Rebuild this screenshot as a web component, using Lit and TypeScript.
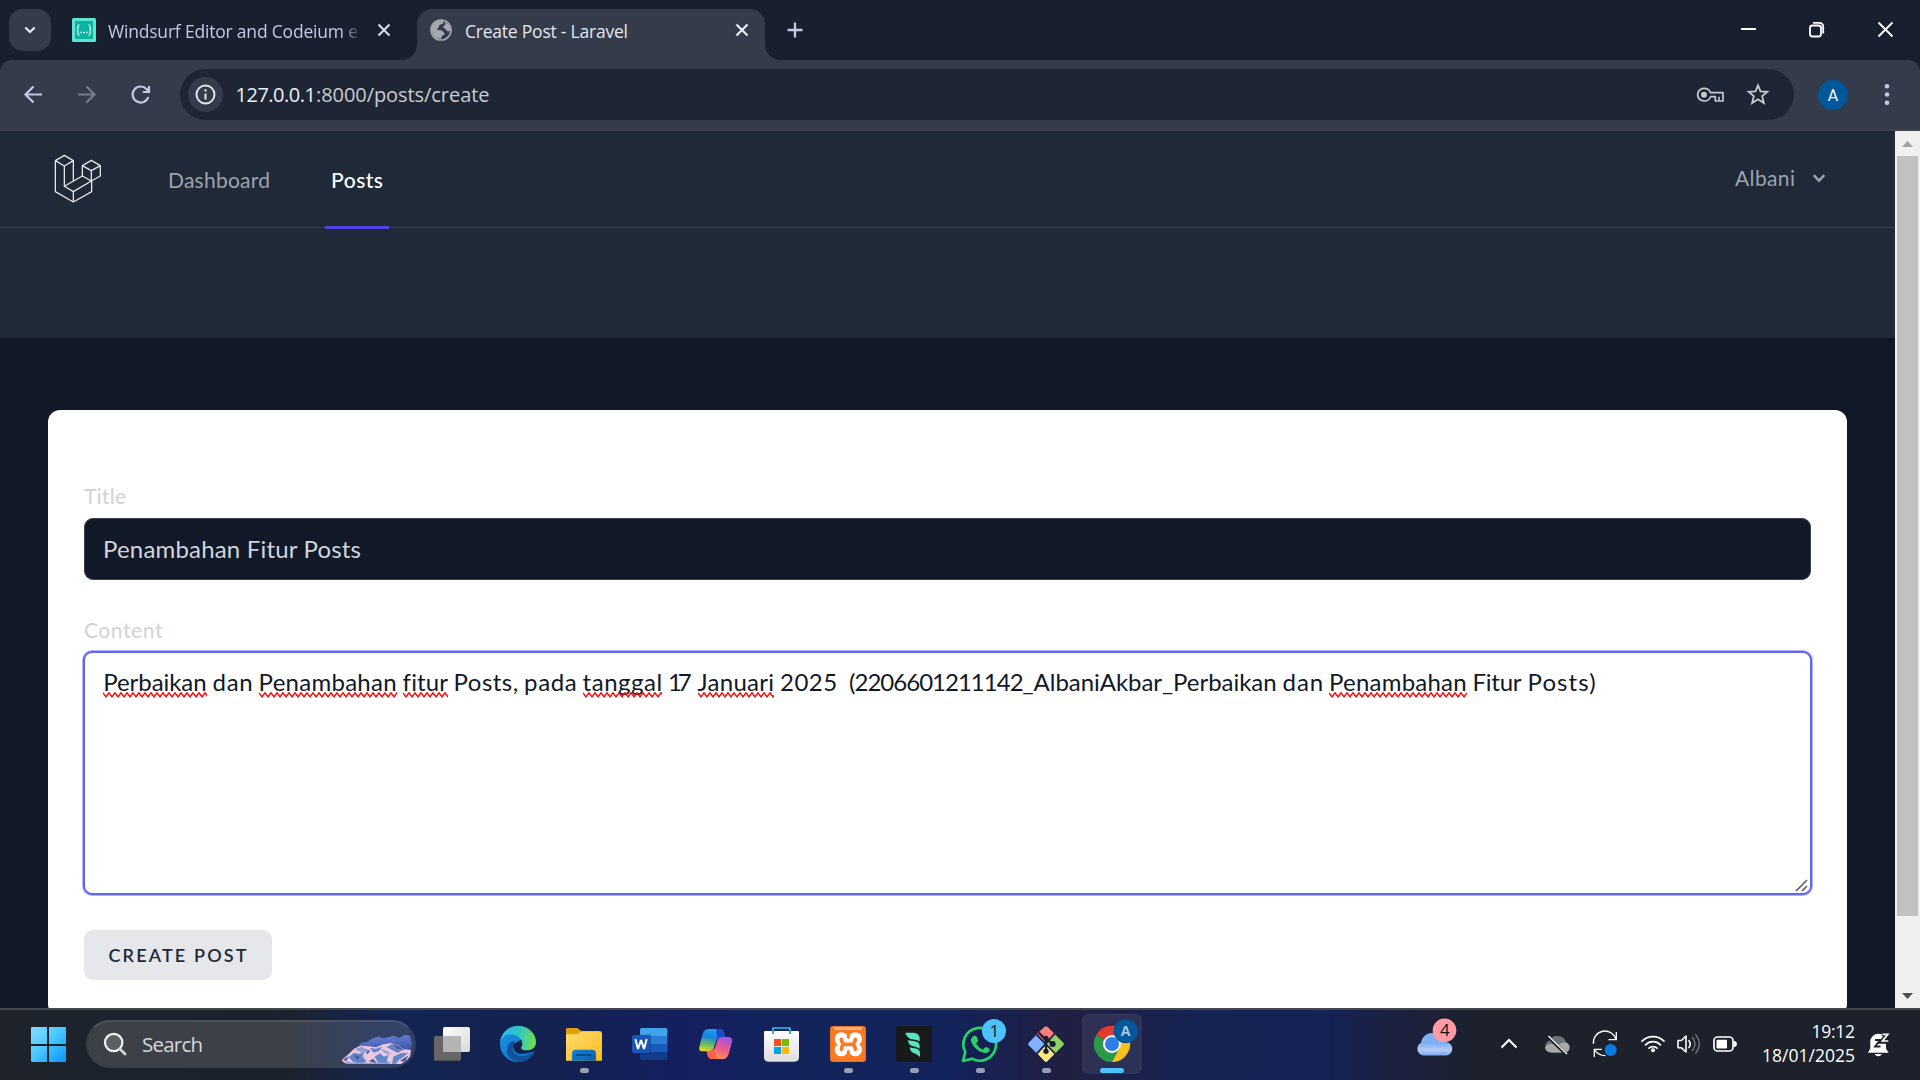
import { LitElement, html, css, svg, nothing } from "lit";
import { customElement, property } from "lit/decorators.js";

/** A run of text spread by letter-spacing so that it fills a given width. */
@customElement("fit-text")
class FitText extends LitElement {
  @property({ type: Number }) width = 0;
  @property({ type: Boolean }) misspelled = false;
  @property() text = "";

  static styles = css`
    :host { display: inline-block; position: relative; white-space: pre; flex: none; }
    .squiggle { position: absolute; left: 0; top: 28px; overflow: hidden; }
  `;

  firstUpdated() {
    const run = this.renderRoot.querySelector(".run") as HTMLElement;
    const natural = run.getBoundingClientRect().width;
    const gap = (this.width - natural) / Math.max(1, this.text.length - 1);
    run.style.letterSpacing = gap.toFixed(3) + "px";
    this.style.width = this.width + "px";
  }

  private squiggle() {
    const points: string[] = [];
    for (let i = 0; i * 3 <= this.width + 3; i++) points.push(`${i * 3},${i % 2 ? 4.8 : 0.8}`);
    return html`<svg class="squiggle" width=${this.width} height="6">
      <polyline points=${points.join(" ")} fill="none" stroke="#ff0000" stroke-width="1.4" />
    </svg>`;
  }

  render() {
    return html`<span class="run">${this.text}</span>${this.misspelled ? this.squiggle() : nothing}`;
  }
}

const pic = (x: number, y: number, w: number, h: number, body: unknown) =>
  html`<svg class="pic" width=${w} height=${h} viewBox="${x} ${y} ${w} ${h}">${body}</svg>`;

const third = (ox: number, oy: number, body: unknown) =>
  svg`<g transform="translate(${ox} ${oy}) scale(0.33333)">${body}</g>`;

/* ---------- taskbar artwork ---------- */
const taskView = third(400, 1000, svg`
  <defs><linearGradient id="tv" x1="0" y1="0" x2="1" y2="1"><stop offset="0" stop-color="#fff"/><stop offset="1" stop-color="#d8d8d8"/></linearGradient></defs>
  <rect x="102" y="108" width="81" height="74" rx="5" fill="#666"/>
  <rect x="129" y="81" width="81" height="75" rx="5" fill="url(#tv)"/>
  <path d="M129 108H183V156H134Q129 156 129 151Z" fill="#b4b4b6"/>
  <path d="M104 181H181" stroke="#505052" stroke-width="3"/>`);

const edge = third(400, 1000, svg`
  <defs>
    <linearGradient id="eg1" x1="0" y1="0.3" x2="1" y2="0.4"><stop offset="0" stop-color="#2fb2ee"/><stop offset="0.5" stop-color="#30c5c8"/><stop offset="1" stop-color="#6be04c"/></linearGradient>
    <linearGradient id="eg2" x1="0" y1="0" x2="0.8" y2="1"><stop offset="0" stop-color="#1b94e0"/><stop offset="1" stop-color="#0a74cf"/></linearGradient>
  </defs>
  <circle cx="354" cy="132" r="54" fill="url(#eg2)"/>
  <path d="M341 131C333 150 342 166 364 168C380 168 392 160 400 158C392 176 376 186 356 186C330 182 318 164 321 145C323 130 336 122 344 122Q341 126 341 131Z" fill="#10539c"/>
  <path d="M341 131C335 150 350 163 366 161C384 161 394 154 401 156L412 140L408 130L366 118Z" fill="#142150"/>
  <path d="M300 128C303 99 326 78 354 78C386 78 408 101 408 126C408 142 396 151 381 151C369 151 361 147 364 142C368 136 367 130 366 124C359 106 338 102 324 104C311 107 303 116 300 128Z" fill="url(#eg1)"/>`);

const explorer = third(400, 1000, svg`
  <defs><linearGradient id="fx" x1="0" y1="0" x2="1" y2="1"><stop offset="0" stop-color="#ffdc70"/><stop offset="1" stop-color="#fcbd1c"/></linearGradient>
  <linearGradient id="fb" x1="0" y1="0" x2="1" y2="1"><stop offset="0" stop-color="#0f83d8"/><stop offset="1" stop-color="#0f5fac"/></linearGradient></defs>
  <path d="M498 88Q498 84 503 84H529Q533 84 536 87L545 94H598V120H498Z" fill="#e0a106"/>
  <path d="M498 103H528Q534 103 538 99L542 96Q545 94 548 94H601Q606 94 606 99V182H498Z" fill="url(#fx)"/>
  <path d="M516 182V161Q516 149 528 149H576Q588 149 588 161V182Z" fill="url(#fb)"/>
  <path d="M530 165H572" stroke="#0b4c8b" stroke-width="6" stroke-linecap="round"/>`);

const word = third(400, 1000, svg`
  <rect x="720" y="84" width="82" height="96" rx="5" fill="#123d8a"/>
  <path d="M720 108V89Q720 84 725 84H797Q802 84 802 89V108Z" fill="#41a5ee"/>
  <rect x="720" y="108" width="82" height="24" fill="#2b7cd3"/>
  <rect x="720" y="132" width="82" height="24" fill="#185abd"/>
  <rect x="720" y="104" width="33" height="60" fill="#0c3578" opacity=".45"/>
  <rect x="696" y="105" width="54" height="54" rx="5" fill="#1857b8"/>
  <path d="M706 117L714 147L723 120L732 147L740 117" fill="none" stroke="#fff" stroke-width="6" stroke-linejoin="bevel"/>`);

const copilot = third(400, 1000, svg`
  <defs>
    <linearGradient id="cp1" x1="0.4" y1="0" x2="0.2" y2="1"><stop offset="0" stop-color="#1aa0f0"/><stop offset="0.35" stop-color="#1684dc"/><stop offset="0.7" stop-color="#6cc05c"/><stop offset="1" stop-color="#f4d21f"/></linearGradient>
    <linearGradient id="cp2" x1="0.7" y1="0" x2="0.3" y2="1"><stop offset="0" stop-color="#a053e8"/><stop offset="0.5" stop-color="#ee5a8c"/><stop offset="1" stop-color="#ff9a4a"/></linearGradient>
  </defs>
  <path d="M924 87H958Q968 87 971 97L976 112H962Q952 112 948 124L940 148Q935 154 925 154H906Q895 153 898 140L908 102Q912 88 924 87Z" fill="url(#cp1)"/>
  <path d="M948 87H958Q968 87 971 97L976 112H962Q956 112 952 117Z" fill="#1b49cc"/>
  <path d="M970 177H936Q926 177 923 166L920 153H932Q942 151 946 140L954 116Q958 111 968 111H986Q999 112 996 126L986 162Q981 177 970 177Z" fill="url(#cp2)"/>
  <path d="M936 177Q926 177 923 166L920 153H932Q939 152 943 147L950 177Z" fill="#fb6248"/>`);

const store = third(400, 1000, svg`
  <defs><linearGradient id="st" x1="0" y1="0" x2="0" y2="1"><stop offset="0" stop-color="#fff"/><stop offset="1" stop-color="#dcdcde"/></linearGradient></defs>
  <path d="M1119 101V84H1170V101" fill="none" stroke="#35bdf2" stroke-width="5"/>
  <path d="M1092 96Q1092 93 1095 93H1194Q1197 93 1197 96V172Q1197 185 1184 185H1105Q1092 185 1092 172Z" fill="url(#st)"/>
  <path d="M1119 93V102M1170 93V102" stroke="#1490df" stroke-width="5"/>
  <rect x="1122" y="117" width="21" height="21" fill="#f25022"/><rect x="1146" y="117" width="21" height="21" fill="#7fba00"/>
  <rect x="1122" y="141" width="21" height="21" fill="#00a4ef"/><rect x="1146" y="141" width="21" height="21" fill="#ffb900"/>`);

const dot = (cx: number) => svg`<rect x=${cx - 13} y="204" width="27" height="15" rx="7.5" fill="#9a9fb8"/>`;

const xampp = third(780, 1000, svg`
  <rect x="150" y="78" width="108" height="108" rx="9" fill="#ee7423"/>
  <rect x="154" y="92" width="100" height="90" rx="5" fill="#fb7a24"/>
  <path d="M158 81H250L243 90H165Z" fill="#f9b184"/>
  <g fill="#fff"><circle cx="184" cy="117" r="20"/><circle cx="226" cy="117" r="20"/><circle cx="184" cy="149" r="20"/><circle cx="226" cy="149" r="20"/><rect x="176" y="117" width="58" height="32"/></g>
  <path d="M184 118Q184 125 190 133Q184 141 184 148M226 118Q226 125 220 133Q226 141 226 148M190 133H220" fill="none" stroke="#fb7a24" stroke-width="11" stroke-linecap="round"/>
  <circle cx="205" cy="110" r="5" fill="#fb7a24"/><circle cx="205" cy="156" r="5" fill="#fb7a24"/>`);

const windsurfApp = third(780, 1000, svg`
  <rect x="348" y="78" width="108" height="108" rx="9" fill="#17191b"/>
  <g fill="#58e5bb"><path d="M376 98H400Q419 98 419 118V124Q412 119 396 118Q382 116 376 98Z"/>
  <path d="M383 121Q387 122 400 123Q419 124 419 138V146Q412 141 399 139Q387 137 383 121Z"/>
  <path d="M389 142Q393 143 404 145Q420 147 420 160V171Q413 163 403 160Q391 157 389 142Z"/></g>`);

const whatsapp = third(780, 1000, svg`
  <path d="M549 183L556 156A49 49 0 1 1 576 176Z" fill="#142150" stroke="#25d366" stroke-width="8" stroke-linejoin="round"/>
  <path d="M581 108Q585 105 589 109L594 119Q595 123 592 126L588 130Q595 144 609 149L614 143Q617 140 621 142L628 146Q631 150 626 155Q614 165 594 151Q577 138 573 123Q572 114 581 108Z" fill="#25d366"/>
  <circle cx="642" cy="93" r="36" fill="#4cc2ff"/>`);

const gitBash = third(780, 1000, svg`
  <path d="M770 103L794 80Q798 77 802 80L828 106L799 134Z" fill="#ff7f7f"/>
  <path d="M768 106L746 128Q743 132 746 136L769 159L796 132Z" fill="#80b3ff"/>
  <path d="M827 105L850 128Q854 132 850 136L827 159L799 132Z" fill="#8dd35f"/>
  <path d="M771 160L798 134L826 160L802 184Q798 188 794 184Z" fill="#ffe680"/>
  <path d="M824 101L769 163M770 104L826 162" stroke="#1a2048" stroke-width="5"/>
  <path d="M776 98L798 120V152M799 116L816 131" stroke="#1a1d38" stroke-width="7" fill="none"/>
  <circle cx="798" cy="115" r="8" fill="#1a1d38"/><circle cx="798" cy="154" r="8" fill="#1a1d38"/><circle cx="818" cy="132" r="9" fill="#1a1d38"/>`);

const chrome = third(780, 1000, svg`
  <rect x="908" y="43" width="176" height="177" rx="16" fill="#fff" fill-opacity=".08" stroke="#fff" stroke-opacity=".09" stroke-width="3"/>
  <path d="M996 132L949 105A54 54 0 0 1 1043 105Z" fill="#e33b2e"/>
  <path d="M996 132L949 105A54 54 0 0 0 996 186L1019 146Z" fill="#2b9a48"/>
  <path d="M996 132L1043 105A54 54 0 0 1 996 186L1019 145Z" fill="#fcc31e"/>
  <path d="M996 105H1043A54 54 0 0 1 1050 132L1022 140Z" fill="#fcc31e"/>
  <circle cx="996" cy="132" r="27" fill="#fff"/><circle cx="996" cy="132" r="21" fill="#2f7de9"/>
  <circle cx="1037" cy="94" r="36" fill="#03579b"/>
  <rect x="960" y="204" width="72" height="15" rx="7.5" fill="#4cc2ff"/>`);

const badge = (x: number, y: number, size: number, fill: string, text: string) =>
  svg`<text x=${x} y=${y} font-family="'Open Sans',sans-serif" font-size=${size} text-anchor="middle" fill=${fill}>${text}</text>`;

const slots = [
  taskView, edge,
  svg`${explorer}${third(400, 1000, dot(553))}`,
  word, copilot, store,
  svg`${xampp}${third(780, 1000, dot(205))}`,
  svg`${windsurfApp}${third(780, 1000, dot(403))}`,
  svg`${whatsapp}${third(780, 1000, dot(601))}${badge(994.5, 1037, 16.5, "#0c1620", "1")}`,
  svg`${gitBash}${third(780, 1000, dot(799))}`,
  svg`${chrome}<text x="1125.7" y="1036" font-family="'Open Sans',sans-serif" font-weight="700" font-size="14" text-anchor="middle" fill="#a9c6df">A</text>`,
];

const startIcon = pic(18, 1010, 60, 70, svg`
  <defs>
    <linearGradient id="wa" gradientUnits="userSpaceOnUse" x1="31" y1="1027" x2="66" y2="1062"><stop offset="0" stop-color="#86dcff"/><stop offset=".45" stop-color="#4cc9fd"/><stop offset="1" stop-color="#0a93fb"/></linearGradient>
  </defs>
  <path d="M32 1027H47V1044H31V1028Q31 1027 32 1027ZM49 1027H65Q66 1027 66 1028V1044H49ZM31 1046H47V1062H32Q31 1062 31 1061ZM49 1046H66V1061Q66 1062 65 1062H49Z" fill="url(#wa)"/>`);

const mountains = pic(338, 1022, 76, 44, third(0, 860, svg`
  <defs><linearGradient id="mt" x1="0" y1="0" x2="0.2" y2="1"><stop offset="0" stop-color="#6b86dc"/><stop offset="1" stop-color="#33479c"/></linearGradient></defs>
  <path d="M1066 570L1082 549L1100 546L1116 536L1134 530L1150 535L1180 527L1198 534L1214 525L1228 526L1236 548L1232 580L1100 595Z" fill="url(#mt)"/>
  <path d="M1025 600L1046 582L1062 566L1082 557L1106 559L1128 562L1150 553L1174 549L1194 556L1212 568L1233 570L1230 590Q1220 606 1204 612H1046Q1030 610 1025 600Z" fill="#ecc8e0"/>
  <path d="M1046 592L1062 578L1078 582L1092 574L1088 590L1100 604L1084 611L1060 606ZM1110 564L1128 566L1146 560L1136 574L1120 578ZM1124 590L1140 580L1152 590L1166 584L1160 602L1170 611H1136ZM1160 562L1176 552L1192 566L1206 572L1192 578L1176 570ZM1180 590L1202 580L1224 578L1212 590L1196 600L1188 611H1176Z" fill="#5f86cb"/>
  <path d="M1028 600L1046 588L1040 602ZM1062 586L1080 590L1072 600ZM1096 566L1110 572L1102 584ZM1176 550L1200 560L1214 572L1190 566ZM1200 602L1226 586L1214 606ZM1106 604L1120 596L1130 610Z" fill="#49589c"/>
  <path d="M1064 568L1086 560L1106 572L1092 580L1076 574ZM1140 566L1160 572L1176 584L1156 580ZM1030 602L1060 608H1130L1180 606L1150 612H1046Z" fill="#8d9fd6"/>`));

/* ---------- tray artwork ---------- */
const weather = pic(1400, 1010, 70, 70, svg`
  <defs><linearGradient id="cl" x1="0" y1="0" x2="0" y2="1"><stop offset="0" stop-color="#76a8f3"/><stop offset=".6" stop-color="#b5cef9"/><stop offset="1" stop-color="#7ba3ee"/></linearGradient></defs>
  <circle cx="1432" cy="1044" r="11" fill="#82aef2"/>
  <path d="M1424 1042Q1432 1041 1436 1046Q1441 1041 1446 1042A6.7 6.7 0 0 1 1445 1055.5H1423A6.8 6.8 0 0 1 1424 1042Z" fill="url(#cl)"/>
  <circle cx="1444.5" cy="1030.3" r="11.8" fill="#ff99a4"/>
  ${badge(1444.8, 1036.3, 17, "#16161a", "4")}`);

const chevUp = pic(1490, 1010, 40, 70, svg`<path d="M1501.5 1047.5L1509 1040L1516.5 1047.5" fill="none" stroke="#fff" stroke-width="2"/>`);

const cloudOff = pic(1530, 1010, 50, 70, svg`
  <path d="M1551 1052.5A6 6 0 0 1 1549 1041A9 8 0 0 1 1566 1042A5.5 5.5 0 0 1 1565 1052.5Z" fill="#6f7378"/>
  <path d="M1556 1046Q1566 1039 1569.5 1046Q1570 1052 1565 1052.5H1551A6 5 0 0 1 1545 1047Q1551 1041 1556 1046Z" fill="#a7a9ac"/>
  <path d="M1547.5 1036L1566.5 1054.5" stroke="#1d222b" stroke-width="3.5"/>
  <path d="M1548.5 1036L1567 1054" stroke="#fff" stroke-width="1.4"/>`);

const sync = pic(1580, 1010, 50, 70, svg`
  <g fill="none" stroke="#fff" stroke-width="1.3"><path d="M1593.5 1044A11.5 11.5 0 0 1 1616 1039.5M1616.3 1032V1039.7H1608.5"/>
  <path d="M1605.5 1055.7Q1598 1055.5 1594.5 1049.5M1594.3 1057V1049.3H1602"/></g>
  <circle cx="1610.7" cy="1050" r="6" fill="#0a7ae0"/>`);

const wifi = pic(1630, 1010, 41, 70, svg`
  <g fill="none" stroke="#fff" stroke-width="1.7" stroke-linecap="round"><path d="M1642 1041.2A15.5 15.5 0 0 1 1664 1041.2M1645.5 1044.8A10.6 10.6 0 0 1 1660.5 1044.8M1649 1048.2A5.8 5.8 0 0 1 1657 1048.2"/></g>
  <circle cx="1653" cy="1050.3" r="2" fill="#fff"/>`);

const volume = pic(1671, 1010, 36, 70, svg`
  <g fill="none" stroke="#fff" stroke-width="1.6" stroke-linejoin="round" stroke-linecap="round"><path d="M1678 1040.5H1681.5L1686 1036V1052L1681.5 1047.8H1678Z"/>
  <path d="M1689 1040.7Q1691.500 1044 1689 1047.5"/></g>
  <g fill="none" stroke="#6d7177" stroke-width="1.5" stroke-linecap="round"><path d="M1692.5 1037.5Q1697.5 1044 1692.5 1050.5M1695.8 1034.8Q1703 1044 1695.8 1053"/></g>`);

const battery = pic(1707, 1010, 43, 70, svg`
  <rect x="1714" y="1037" width="19" height="14" rx="3.5" fill="none" stroke="#fff" stroke-width="1.7"/>
  <rect x="1716.5" y="1039.7" width="10.5" height="8.7" rx="1" fill="#fff"/>
  <path d="M1734 1041H1735Q1737 1042 1737 1044Q1737 1046 1735 1047H1734Z" fill="#fff"/>`);

const bell = pic(1860, 1010, 60, 70, svg`
  <path d="M1868 1052.8L1870.3 1048.5V1041.5A8 8 0 0 1 1878.5 1033.7Q1885.5 1034 1886 1041V1048.5L1888.5 1052.8ZM1874.5 1054H1882Q1880.5 1056.2 1878.3 1056.2Q1876 1056.2 1874.5 1054Z" fill="#fff"/>
  <path d="M1875 1040H1880L1875 1046.5H1880.5" fill="none" stroke="#1d222b" stroke-width="1.8"/>
  <path d="M1882 1034H1888L1882 1041.5H1888.5" fill="none" stroke="#1d222b" stroke-width="4.5"/>
  <path d="M1882.5 1034.3H1887.8L1882.5 1041H1888.3" fill="none" stroke="#fff" stroke-width="1.7"/>`);

/* ---------- browser artwork ---------- */
const tabSearch = pic(9, 9, 42, 42, svg`<path d="M25.3 27.5L30 32L34.7 27.5" fill="none" stroke="#e6e8ee" stroke-width="2.3"/>`);
const favicon = pic(72, 18, 24, 24, svg`
  <rect x="72" y="18" width="24" height="24" rx="1.5" fill="#5fe5cf"/><rect x="75" y="21" width="18" height="18" fill="#0db3a2"/>
  <path d="M79.5 24.8Q78 24.8 78 26.5V28.5Q78 30 76.8 30Q78 30 78 31.5V33.5Q78 35.2 79.5 35.2M88.5 24.8Q90 24.8 90 26.5V28.5Q90 30 91.2 30Q90 30 90 31.5V33.5Q90 35.2 88.5 35.2" fill="none" stroke="#e4fffa" stroke-width="1.2"/>
  <path d="M80.5 32.5H82M83.3 32.5H84.8M86.1 32.5H87.6" stroke="#e4fffa" stroke-width="1.4"/>`);
const cross = (cx: number, color: string) => pic(cx - 9, 21, 18, 18, svg`<path d="M${cx - 5.5} 24.5L${cx + 5.5} 35.5M${cx + 5.5} 24.5L${cx - 5.5} 35.5" stroke=${color} stroke-width="2.2"/>`);
const globe = pic(430, 19, 22, 22, third(400, 0, svg`
  <circle cx="123" cy="90" r="30" fill="#343c4c" stroke="#a4a8b0" stroke-width="5"/>
  <path d="M95 92Q94 74 108 65Q120 59 128 62Q134 68 126 73Q116 74 117 81Q110 84 112 91Q124 88 130 95Q136 100 132 105Q124 106 123 117Q104 116 98 103Z" fill="#a4a8b0"/>
  <path d="M134 66Q150 72 152 90Q149 96 141 93Q139 87 131 85Q128 78 135 76Q138 71 134 66Z" fill="#a4a8b0"/>`));
const plus = pic(786, 21, 18, 18, svg`<path d="M795 22.5V37.5M787.5 30H802.5" stroke="#c3cae4" stroke-width="2.3"/>`);
const windowControls = pic(1720, 0, 200, 60, svg`
  <g fill="none" stroke="#fff" stroke-width="1.8"><path d="M1741 29H1756M1878.5 22.5L1892.5 36.5M1892.5 22.5L1878.5 36.5"/>
  <rect x="1810" y="25.5" width="11" height="11" rx="2.5"/><path d="M1813 22.8H1819Q1823.2 22.8 1823.2 27V33.5"/></g>`);
const navIcons = pic(0, 60, 180, 69, svg`
  <g fill="none" stroke-width="2.2"><path d="M42 94.5H26M33.5 86.5L25.5 94.5L33.5 102.5" stroke="#c3cae4"/>
  <path d="M78 94.5H94M86.5 86.5L94.5 94.5L86.5 102.5" stroke="#767d8b"/>
  <path d="M148.3 97A8 8 0 1 1 146.5 89L148.8 91.5M149 86V92H142.8" stroke="#c3cae4"/></g>`);
const infoIcon = pic(188, 77, 35, 35, svg`
  <circle cx="205.5" cy="94.5" r="17.5" fill="#343c4c"/><circle cx="205.5" cy="94.5" r="9" fill="none" stroke="#e3e5ea" stroke-width="2"/>
  <path d="M205.5 93.5V99.5M205.5 89.3V91.4" stroke="#e3e5ea" stroke-width="2"/>`);
const keyStar = pic(1690, 76, 90, 38, third(1600, 0, svg`
  <g fill="none" stroke="#c6c9d0" stroke-width="5"><path d="M332 278H369V303H346V290H332A20 19 0 1 1 332 278Z" stroke-linejoin="round"/><path d="M357 290V301"/></g>
  <circle cx="312" cy="284" r="9" fill="#c6c9d0"/>
  <path d="M474 256L481.5 274L502 275.5L486.5 288.5L491.5 309L474 298L456.5 309L461.5 288.5L446 275.5L466.5 274Z" fill="none" stroke="#c6c9d0" stroke-width="5.5"/>`));
const menuDots = pic(1876, 76, 22, 38, svg`<g fill="#c3cae4"><circle cx="1887" cy="86.3" r="2.3"/><circle cx="1887" cy="94.5" r="2.3"/><circle cx="1887" cy="102.8" r="2.3"/></g>`);

/* ---------- page artwork ---------- */
const logo = html`<svg class="logo" width="48" height="49.3" viewBox="160 72 144 148">
  <g fill="none" stroke="#e5e7eb" stroke-width="3.9" stroke-linejoin="round">
    <path d="M191 76L218 92L191 108L164 92ZM164 92V185L218 216L273 185V153M218 92V154M191 108V169L245 138M191 169L218 185L272 153M218 185V216"/>
    <path d="M272 91L299 107L272 122L245 107ZM245 107V138L272 153L299 138V107M272 122V153"/>
  </g></svg>`;

type Word = [string, number, boolean?];
/** The post's content, grouped by the spaces between its words. */
const content: Word[][] = [
  [["Perbaikan", 103.3, true]], [["dan", 40]], [["Penambahan", 138, true]], [["fitur", 45, true]],
  [["Posts,", 64.5]], [["pada", 52.5]], [["tanggal", 79.5, true]], [["17", 23.5]], [["Januari", 76.5, true]], [["2025", 57]],
  [],
  [["(2206601211142_", 184.5], ["AlbaniAkbar_", 139.5], ["Perbaikan", 103.5]],
  [["dan", 40.5]], [["Penambahan", 137.5, true]], [["Fitur", 49]], [["Posts)", 68]],
];

@customElement("app-root")
class AppRoot extends LitElement {
  static styles = css`
    :host { display: flex; flex-direction: column; width: 1920px; height: 1080px; overflow: hidden;
      font-family: "Open Sans", "Noto Sans", sans-serif; background: #111827; }
    * { box-sizing: border-box; }
    .pic, .logo { display: block; flex: none; }

    .tabs { height: 60px; flex: none; background: #18202f; display: flex; align-items: flex-start; padding-left: 9px; }
    .tab-search { margin-top: 9px; width: 42px; height: 42px; border-radius: 14px; background: #343c4c; flex: none; }
    .tab { height: 51px; margin-top: 9px; display: flex; align-items: center; padding-bottom: 9px; color: #c3cae4; font-size: 17.5px; flex: none; }
    .tab-idle { width: 366px; padding-left: 21px; }
    .tab-idle .title { width: 254px; margin: 1px 13px 0 12px; white-space: nowrap;
      -webkit-mask-image: linear-gradient(90deg, #000 92%, transparent 100%); }
    .tab-active { width: 348px; background: #343c4c; border-radius: 15px 15px 0 0; padding-left: 13px; color: #e4e6ec; position: relative; }
    .tab-active .title { margin: 1px 104.5px 0 13px; }
    .tab-active::before, .tab-active::after { content: ""; position: absolute; bottom: 0; width: 15px; height: 15px; }
    .tab-active::before { left: -15px; background: radial-gradient(circle at 0 0, transparent 14.5px, #343c4c 15px); }
    .tab-active::after { right: -15px; background: radial-gradient(circle at 100% 0, transparent 14.5px, #343c4c 15px); }
    .new-tab { margin: 21px 0 0 21px; }
    .window { margin-left: auto; }

    .toolbar-back { background: #18202f; flex: none; }
    .toolbar { height: 71px; background: #343c4c; border-bottom: 2px solid #42444c; border-radius: 12px 12px 0 0; display: flex; align-items: center; }
    .omnibox { width: 1614px; height: 51px; border-radius: 26px; background: #1e2636; display: flex; align-items: center; padding: 0 14px 0 8px; color: #c8cbd1; font-size: 20px; }
    .host { margin-left: 12.5px; color: #eceef2; }
    .url-icons { margin-left: auto; }
    .avatar { width: 30px; height: 30px; border-radius: 50%; background: #01579b; color: #fff; font-size: 16px; line-height: 31px; text-align: center; margin: 0 28px 0 24px; font-family: Roboto, sans-serif; }

    .viewport { height: 877px; flex: none; display: flex; overflow: hidden; }
    .page { width: 1895px; height: 877px; overflow: hidden; background: #111827; font-family: Lato, "Liberation Sans", sans-serif; flex: none; }
    .nav { height: 97px; background: #1f2937; border-bottom: 1px solid #374151; display: flex; align-items: flex-start; padding: 0 69px 0 53.5px; font-size: 21px; color: #9ca3af; position: relative; z-index: 1; }
    .logo { margin-top: 23px; }
    .links { display: flex; gap: 49px; margin-left: 60.5px; }
    .link { height: 98px; display: flex; align-items: center; padding: 2px 6px 0; border-bottom: 3px solid transparent; }
    .link.active { color: #fff; border-color: #4f46e5; font-weight: 500; }
    .user { margin-left: auto; height: 94px; display: flex; align-items: center; gap: 16px; }
    .user fit-text { margin-top: -1px; }
    .header { height: 110px; background: #1f2937; box-shadow: 0 1px 4px rgba(0,0,0,.25); }
    .card { margin: 72px 48px 0; height: 606px; background: #fff; border-radius: 12px; padding: 71px 35px 0 36px; }
    .label { display: block; height: 30px; line-height: 30px; font-size: 21px; color: #d1d5db; font-weight: 500; }
    .input { height: 62px; margin: 7px 1px 35px 0; border: 1px solid #374151; border-radius: 9px; background: #111827; color: #d1d5db; font-size: 24px; line-height: 59px; padding-left: 18px; }
    .textarea { height: 244px; margin: 6px 0 35px -1px; border: 2px solid #6366f1; box-shadow: 0 0 0 1px rgba(99,102,241,.5); border-radius: 9px; background: #fff; display: flex; justify-content: space-between; align-items: flex-end; }
    .words { align-self: flex-start; display: flex; gap: 6px; padding: 11px 0 0 18.3px; font-size: 24px; line-height: 36px; color: #111827; }
    .group { display: flex; }
    .button { width: 188px; height: 50px; border-radius: 9px; background: #e5e7eb; color: #1f2937; font-size: 18px; line-height: 50px; padding-left: 24.5px; font-weight: 600; }

    .scrollbar { width: 25px; background: #f0f0f0; display: flex; flex-direction: column; align-items: center; flex: none; }
    .thumb { width: 21px; height: 760px; background: #c1c1c1; }
    .scroll-down { margin-top: auto; }

    .taskbar { height: 72px; flex: none; border-top: 2px solid #43474e; display: flex; align-items: center; padding-left: 18px;
      background: linear-gradient(90deg, #1d222b 0, #1c222d 290px, #142450 380px, #13214f 550px, #151f60 680px, #12235a 800px, #13225a 950px, #201f42 1060px, #1b2049 1130px, #142352 1200px, #142254 1330px, #1b2040 1390px, #1c212c 1480px); }
    .search { width: 330px; height: 48px; margin: 0 3px 2px 8px; border: 2px solid rgba(255,255,255,.13); border-top-color: rgba(255,255,255,.22); border-radius: 24px; background: rgba(255,255,255,.14); background-clip: padding-box; display: flex; align-items: center; color: #d6d7da; font-size: 20.5px; padding-left: 12px; overflow: hidden; }
    .search-text { margin: 0 135px 0 14px; }
    .tray { margin-left: auto; display: flex; align-items: center; color: #fff; font-size: 17.5px; }
    .clock { width: 110px; display: flex; flex-direction: column; align-items: flex-end; padding-right: 5px; line-height: 24.5px; margin-top: -4px; }
  `;

  private fit(text: string, width: number, misspelled = false) {
    return html`<fit-text .text=${text} .width=${width} .misspelled=${misspelled}></fit-text>`;
  }

  private browser() {
    return html`
      <div class="tabs">
        <div class="tab-search">${tabSearch}</div>
        <div class="tab tab-idle">${favicon}<div class="title">${this.fit("Windsurf Editor and Codeium e", 250)}</div>${cross(384, "#d5d9e8")}</div>
        <div class="tab tab-active">${globe}<div class="title">${this.fit("Create Post - Laravel", 163)}</div>${cross(741, "#eceef2")}</div>
        <div class="new-tab">${plus}</div>
        <div class="window">${windowControls}</div>
      </div>
      <div class="toolbar-back"><div class="toolbar">
        ${navIcons}
        <div class="omnibox">${infoIcon}<span class="host">${this.fit("127.0.0.1", 80.5)}</span>${this.fit(":8000/posts/create", 173.5)}<div class="url-icons">${keyStar}</div></div>
        <div class="avatar">A</div>${menuDots}
      </div></div>`;
  }

  private page() {
    return html`
      <div class="page">
        <div class="nav">
          ${logo}
          <div class="links">
            <div class="link">${this.fit("Dashboard", 102)}</div>
            <div class="link active">${this.fit("Posts", 52)}</div>
          </div>
          <div class="user">${this.fit("Albani", 60)}
            <svg class="pic" width="15" height="12" viewBox="1811 173 15 12"><path d="M1813.7 176.2L1819 181.7L1824.3 176.2" fill="none" stroke="#9ca3af" stroke-width="2.4"/></svg>
          </div>
        </div>
        <div class="header"></div>
        <div class="card">
          <span class="label">${this.fit("Title", 42)}</span>
          <div class="input">${this.fit("Penambahan Fitur Posts", 258)}</div>
          <span class="label">${this.fit("Content", 78.5)}</span>
          <div class="textarea">
            <div class="words">
              ${content.map((group) => html`<span class="group">${group.map(([t, w, m]) => this.fit(t, w, m))}</span>`)}
            </div>
            <svg class="pic" width="15" height="15" viewBox="0 0 15 15"><path d="M1 13L12 2M7 13L12 8" stroke="#555" stroke-width="1.5"/></svg>
          </div>
          <div class="button">${this.fit("CREATE POST", 138)}</div>
        </div>
      </div>
      <div class="scrollbar">
        <svg class="pic" width="25" height="25" viewBox="0 0 25 25"><path d="M7 16L12.5 10L18 16Z" fill="#a3a3a3"/></svg>
        <div class="thumb"></div>
        <svg class="pic scroll-down" width="25" height="25" viewBox="0 0 25 25"><path d="M7 10L12.5 16L18 10Z" fill="#505050"/></svg>
      </div>`;
  }

  private taskbar() {
    return html`
      <div class="taskbar">
        ${startIcon}
        <div class="search">
          <svg class="pic" width="28" height="28" viewBox="100 1030 28 28"><circle cx="113.7" cy="1042.5" r="8.7" fill="#5c5f66" stroke="#f1f1f2" stroke-width="2.2"/><path d="M120 1049L125 1054" stroke="#d4d4d6" stroke-width="2.8" stroke-linecap="round"/></svg>
          <span class="search-text">${this.fit("Search", 61)}</span>${mountains}
        </div>
        ${slots.map((art, i) => pic(419 + 66 * i, 1010, 66, 70, art))}
        <div class="tray">
          ${weather}<svg class="pic" width="20" height="70"></svg>${chevUp}${cloudOff}${sync}${wifi}${volume}${battery}
          <div class="clock">${this.fit("19:12", 43.5)}${this.fit("18/01/2025", 93)}</div>
          ${bell}
        </div>
      </div>`;
  }

  render() {
    return html`${this.browser()}<div class="viewport">${this.page()}</div>${this.taskbar()}`;
  }
}
